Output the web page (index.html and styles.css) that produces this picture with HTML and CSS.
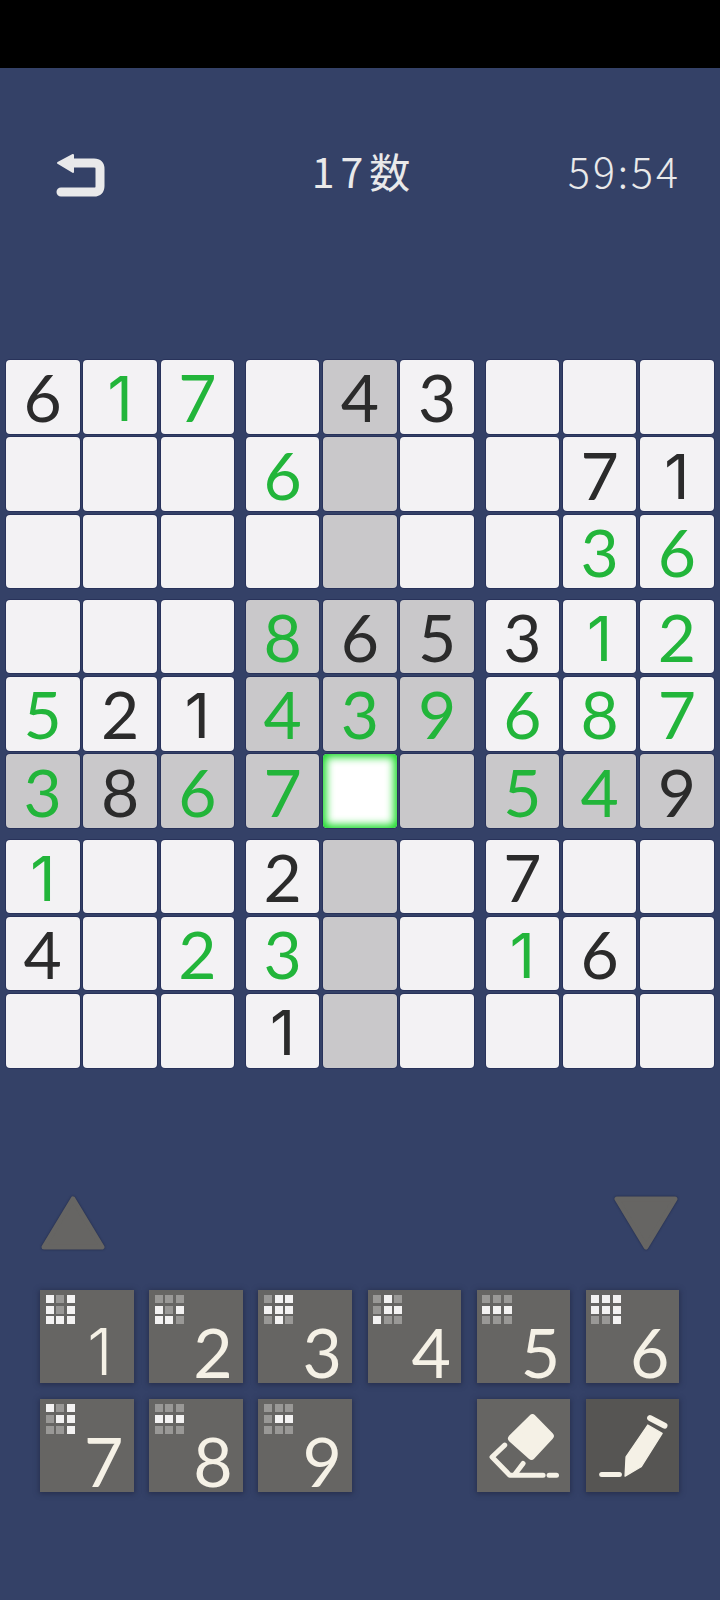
FILE: index.html
```html
<!DOCTYPE html>
<html lang="ja">
<head>
<meta charset="utf-8">
<title>17数</title>
<link rel="stylesheet" href="styles.css">
</head>
<body>
<div class="status"></div>
<header class="header">
  <svg class="back" viewBox="0 0 50 44"><path class="back-line" d="M14 10H38Q44 10 44 16V33Q44 39 38 39H5"/><path class="back-head" d="M2 10L17 2V19Z"/></svg>
  <div class="title"><span class="tdigits">17</span>数</div>
  <div class="timer">59:54</div>
</header>
<main class="board">
  <div class="block">
    <div class="cell">6</div><div class="cell g one">1</div><div class="cell g">7</div>
    <div class="cell"></div><div class="cell"></div><div class="cell"></div>
    <div class="cell"></div><div class="cell"></div><div class="cell"></div>
  </div>
  <div class="block">
    <div class="cell"></div><div class="cell s">4</div><div class="cell">3</div>
    <div class="cell g">6</div><div class="cell s"></div><div class="cell"></div>
    <div class="cell"></div><div class="cell s"></div><div class="cell"></div>
  </div>
  <div class="block">
    <div class="cell"></div><div class="cell"></div><div class="cell"></div>
    <div class="cell"></div><div class="cell">7</div><div class="cell one">1</div>
    <div class="cell"></div><div class="cell g">3</div><div class="cell g">6</div>
  </div>
  <div class="block">
    <div class="cell"></div><div class="cell"></div><div class="cell"></div>
    <div class="cell g">5</div><div class="cell">2</div><div class="cell one">1</div>
    <div class="cell g s">3</div><div class="cell s">8</div><div class="cell g s">6</div>
  </div>
  <div class="block">
    <div class="cell g s">8</div><div class="cell s">6</div><div class="cell s">5</div>
    <div class="cell g s">4</div><div class="cell g s">3</div><div class="cell g s">9</div>
    <div class="cell g s">7</div><div class="cell active"></div><div class="cell s"></div>
  </div>
  <div class="block">
    <div class="cell">3</div><div class="cell g one">1</div><div class="cell g">2</div>
    <div class="cell g">6</div><div class="cell g">8</div><div class="cell g">7</div>
    <div class="cell g s">5</div><div class="cell g s">4</div><div class="cell s">9</div>
  </div>
  <div class="block">
    <div class="cell g one">1</div><div class="cell"></div><div class="cell"></div>
    <div class="cell">4</div><div class="cell"></div><div class="cell g">2</div>
    <div class="cell"></div><div class="cell"></div><div class="cell"></div>
  </div>
  <div class="block">
    <div class="cell">2</div><div class="cell s"></div><div class="cell"></div>
    <div class="cell g">3</div><div class="cell s"></div><div class="cell"></div>
    <div class="cell one">1</div><div class="cell s"></div><div class="cell"></div>
  </div>
  <div class="block">
    <div class="cell">7</div><div class="cell"></div><div class="cell"></div>
    <div class="cell g one">1</div><div class="cell">6</div><div class="cell"></div>
    <div class="cell"></div><div class="cell"></div><div class="cell"></div>
  </div>
</main>
<div class="arrows">
  <svg class="tri" viewBox="0 0 64 56"><path d="M32 4L61 52H3Z"/></svg>
  <svg class="tri" viewBox="0 0 64 56"><path d="M3 4H61L32 52Z"/></svg>
</div>
<section class="pad">
  <div class="key"><div class="mini"><i></i><b></b><i></i><i></i><b></b><i></i><i></i><i></i><i></i></div><span class="num one">1</span></div>
  <div class="key"><div class="mini"><b></b><b></b><b></b><i></i><b></b><i></i><i></i><i></i><b></b></div><span class="num">2</span></div>
  <div class="key"><div class="mini"><b></b><i></i><i></i><i></i><i></i><i></i><b></b><i></i><b></b></div><span class="num">3</span></div>
  <div class="key"><div class="mini"><b></b><i></i><b></b><b></b><i></i><i></i><i></i><b></b><b></b></div><span class="num">4</span></div>
  <div class="key"><div class="mini"><b></b><b></b><b></b><i></i><i></i><i></i><b></b><b></b><b></b></div><span class="num">5</span></div>
  <div class="key"><div class="mini"><i></i><i></i><i></i><i></i><i></i><i></i><b></b><b></b><i></i></div><span class="num">6</span></div>
  <div class="key"><div class="mini"><i></i><b></b><i></i><b></b><i></i><i></i><b></b><b></b><i></i></div><span class="num">7</span></div>
  <div class="key"><div class="mini"><b></b><b></b><b></b><i></i><i></i><i></i><b></b><b></b><b></b></div><span class="num">8</span></div>
  <div class="key"><div class="mini"><b></b><b></b><b></b><b></b><i></i><i></i><b></b><b></b><b></b></div><span class="num">9</span></div>
  <div class="spacer"></div>
  <div class="key"><svg class="tool" viewBox="0 0 280 280"><path class="fill round" d="M166 58L218 111L163 170L105 118Z"/><path class="line" d="M83 138L45 174L98 228H198M138 193L113 226"/><path class="line" d="M216 228H238"/></svg></div>
  <div class="key dark"><svg class="tool" viewBox="0 0 280 280"><path class="fill" d="M185 78L228 103L165 203L117 231L120 173Z"/><path class="line wide" d="M192 57L235 80"/><path class="line" d="M47 226H100"/></svg></div>
</section>
</body>
</html>
```
FILE: styles.css
```css
* { box-sizing: border-box; }
html, body { margin: 0; padding: 0; }
body {
  width: 720px;
  height: 1600px;
  overflow: hidden;
  background: #344167;
  font-family: Lato, "Noto Sans", sans-serif;
}
.status { height: 68px; background: #000; }
.header {
  height: 292px;
  padding: 80px 41px 0 56px;
  display: grid;
  grid-template-columns: 1fr auto 1fr;
  align-items: start;
  color: #e9e9ea;
}
.back { width: 50px; height: 44px; display: block; margin-top: 5px; }
.back-line { fill: none; stroke: #e9e9ea; stroke-width: 9; stroke-linecap: round; }
.back-head { fill: #e9e9ea; stroke: #e9e9ea; stroke-width: 2; stroke-linejoin: round; }
.title, .timer {
  font-family: "Noto Sans CJK JP", sans-serif;
  font-weight: 300;
  font-size: 41px;
  line-height: 44px;
}
.tdigits { letter-spacing: 6px; }
.title { font-weight: 400; margin-right: 13px; }
.timer { justify-self: end; letter-spacing: 3px; margin-right: -2px; }
.board {
  padding-left: 6px;
  display: grid;
  grid-template-columns: repeat(3, 228.1px);
  grid-template-rows: repeat(3, 228.1px);
  gap: 11.7px;
}
.block {
  display: grid;
  grid-template-columns: repeat(3, 73.5px);
  grid-template-rows: repeat(3, 73.5px);
  gap: 3.8px;
}
.cell {
  display: flex;
  align-items: center;
  justify-content: center;
  border-radius: 4px;
  background: #f3f2f4;
  box-shadow: 0 0 0 1px #28325a;
  color: #2b2b2b;
  font-size: 66px;
  line-height: 73px;
}
.g { color: #22b53a; }
.s { background: #c9c8ca; }
.active {
  background: #fff;
  box-shadow: 0 0 0 1px #28325a, inset 0 0 8px 3px #10d820;
}
.one { font-family: Inter, sans-serif; }
.cell.one { font-size: 62px; padding-top: 4px; }
.arrows {
  margin-top: 127px;
  padding: 0 42px 0 41px;
  display: flex;
  justify-content: space-between;
}
.tri { width: 64px; height: 56px; display: block; filter: drop-shadow(0 0 1px #1f2745); }
.tri path { fill: #666563; stroke: #666563; stroke-width: 5; stroke-linejoin: round; }
.pad {
  margin: 39px 0 0 40px;
  display: grid;
  grid-template-columns: repeat(6, 93.5px);
  grid-auto-rows: 93.5px;
  gap: 15.7px;
}
.key {
  position: relative;
  display: flex;
  justify-content: flex-end;
  align-items: flex-end;
  padding: 0 10px 0 0;
  background: #666563;
  box-shadow: 0 1px 5px 1px #27304f;
  color: #f5f1e6;
}
.dark { background: #565553; }
.num { font-size: 68px; line-height: 62px; }
.num.one { font-size: 64px; padding-right: 11px; font-weight: 300; }
.mini {
  position: absolute;
  left: 5.5px;
  top: 5.5px;
  display: grid;
  grid-template-columns: repeat(3, 8px);
  grid-auto-rows: 8px;
  gap: 2.67px;
}
.mini i { background: #f3f2f2; }
.mini b { background: #999896; }
.spacer { grid-column: span 1; }
.tool { position: absolute; inset: 0; width: 100%; height: 100%; }
.fill { fill: #f5f1e6; stroke: #f5f1e6; stroke-width: 4; stroke-linejoin: round; }
.round { stroke-width: 24; }
.line { fill: none; stroke: #f5f1e6; stroke-width: 15; stroke-linecap: round; stroke-linejoin: round; }
.wide { stroke-width: 18; }
```
